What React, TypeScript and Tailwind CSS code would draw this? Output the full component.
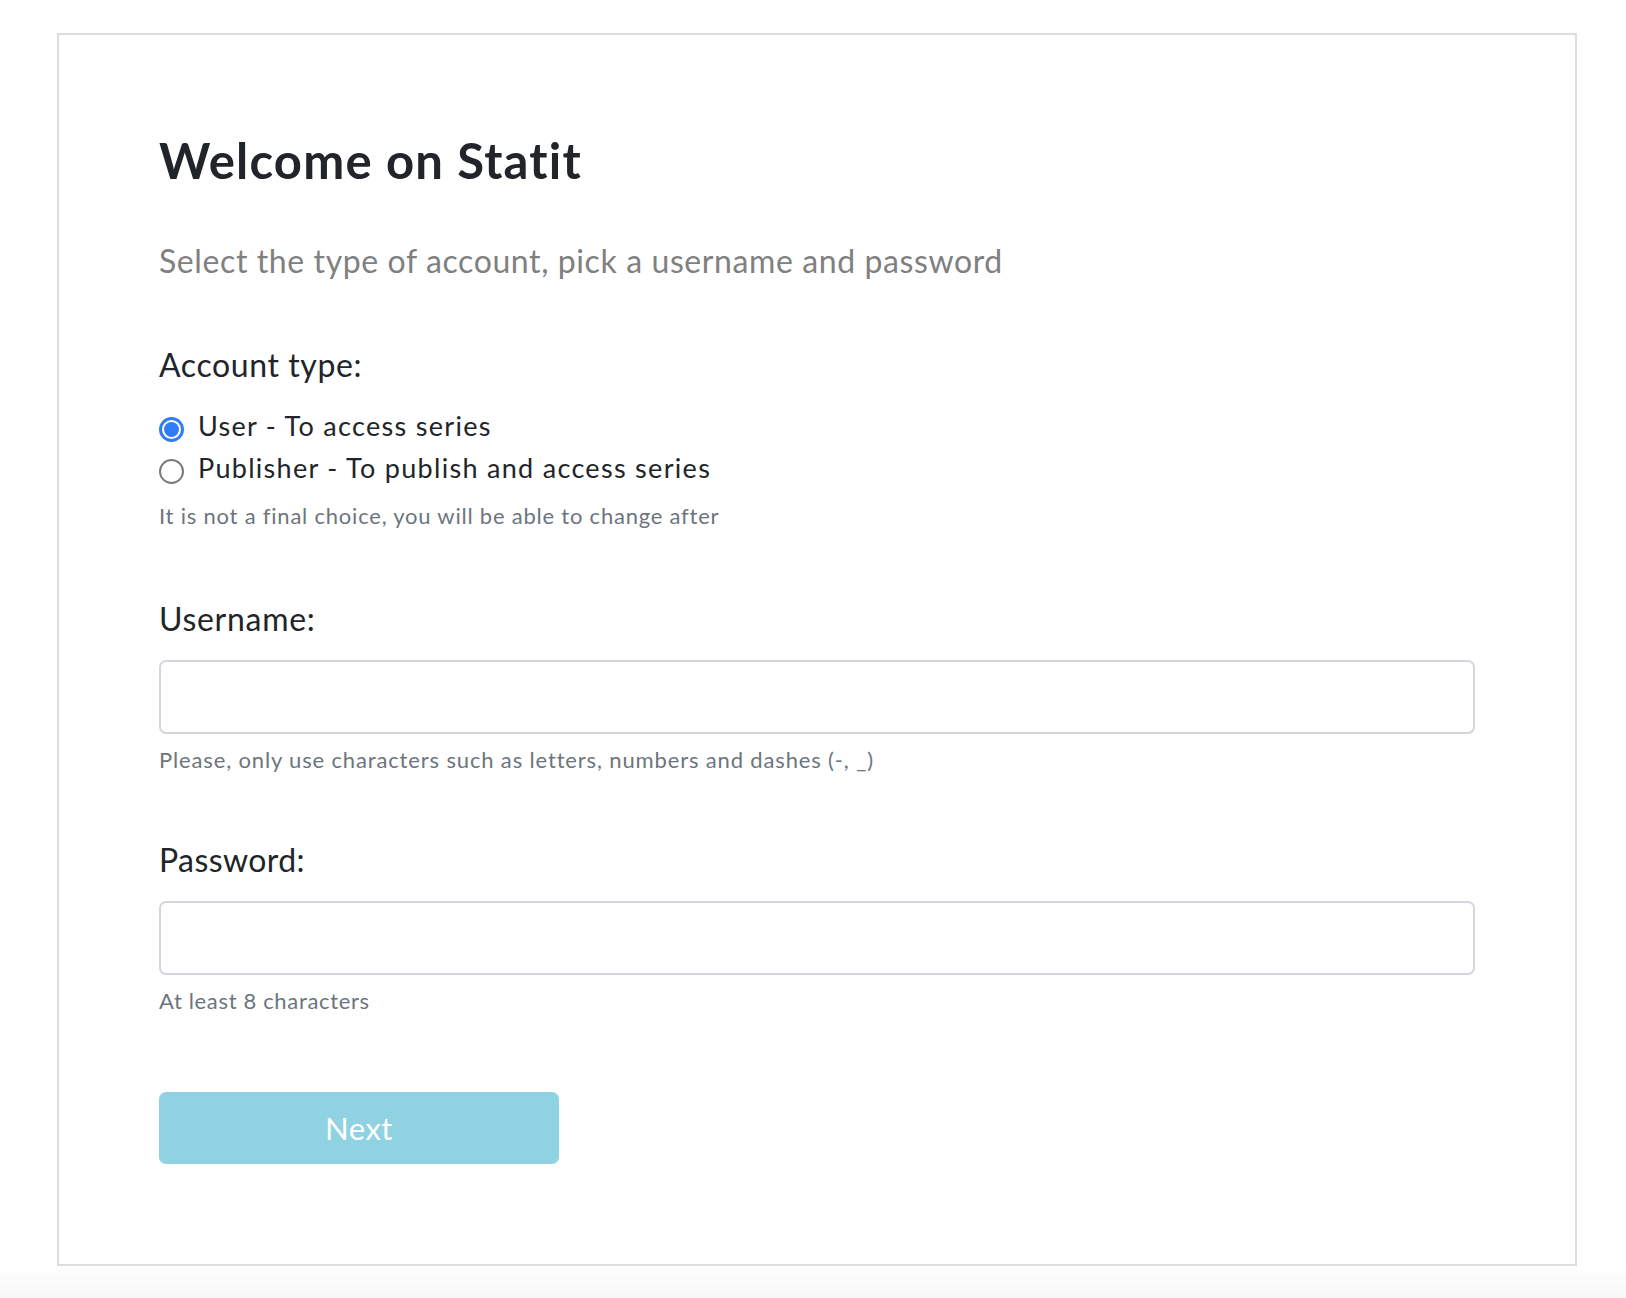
import React from "react";

function Radio({ checked, label }: { checked: boolean; label: string }) {
  return (
    <label className="flex items-center gap-[14px] h-[42px] text-[27px] leading-[42px] tracking-[1.3px] text-[#212529]">
      {checked ? (
        <span className="mt-[6px] flex h-[25px] w-[25px] shrink-0 items-center justify-center rounded-full border-[3px] border-[#2f7cf6] bg-white">
          <span className="h-[15px] w-[15px] rounded-full bg-[#2f7cf6]" />
        </span>
      ) : (
        <span className="mt-[6px] h-[25px] w-[25px] shrink-0 rounded-full border-[2px] border-[#7a7a7a] bg-white" />
      )}
      <span>{label}</span>
    </label>
  );
}

export default function App() {
  return (
    <div
      className="min-h-[1298px] bg-white"
      style={{ fontFamily: "Lato, 'Noto Sans', sans-serif" }}
    >
      <div className="pt-[33px]">
        <div className="ml-[57px] w-[1520px] border-2 border-[#dddddd] bg-white px-[100px] pt-[96px] pb-[100px]">
          <h1 className="text-[49px] leading-[58px] font-bold tracking-[1.2px] text-[#212529]">
            Welcome on Statit
          </h1>
          <p className="mt-[49px] text-[32px] leading-[45px] tracking-[0.6px] text-[#808080]">
            Select the type of account, pick a username and password
          </p>

          <div className="mt-[59px] text-[32px] leading-[45px] tracking-[0.6px] text-[#212529]">
            Account type:
          </div>
          <div className="mt-[18px] flex flex-col">
            <Radio checked label="User - To access series" />
            <Radio checked={false} label="Publisher - To publish and access series" />
          </div>
          <div className="mt-[11px] text-[22px] leading-[32px] tracking-[0.78px] text-[#6c757d]">
            It is not a final choice, you will be able to change after
          </div>

          <div className="mt-[64px] text-[32px] leading-[45px] tracking-[0.7px] text-[#212529]">
            Username:
          </div>
          <input
            type="text"
            className="mt-[19px] block h-[74px] w-full rounded-[7px] border-2 border-[#d3d7db] bg-white px-4 text-[26px] outline-none"
          />
          <div className="mt-[10px] text-[22px] leading-[32px] tracking-[0.85px] text-[#6c757d]">
            Please, only use characters such as letters, numbers and dashes (-, _)
          </div>

          <div className="mt-[61px] text-[32px] leading-[45px] tracking-[0.4px] text-[#212529]">
            Password:
          </div>
          <input
            type="password"
            className="mt-[19px] block h-[74px] w-full rounded-[7px] border-2 border-[#d3d7db] bg-white px-4 text-[26px] outline-none"
          />
          <div className="mt-[10px] text-[22px] leading-[32px] tracking-[0.66px] text-[#6c757d]">
            At least 8 characters
          </div>

          <button
            type="button"
            className="mt-[75px] flex h-[72px] w-[400px] items-center justify-center rounded-[7px] bg-[#8fd2e1] text-[31px] tracking-[0.5px] text-white"
          >
            Next
          </button>
        </div>
        <div className="h-[32px] bg-gradient-to-b from-white to-[#f7f7f7]" />
      </div>
    </div>
  );
}
